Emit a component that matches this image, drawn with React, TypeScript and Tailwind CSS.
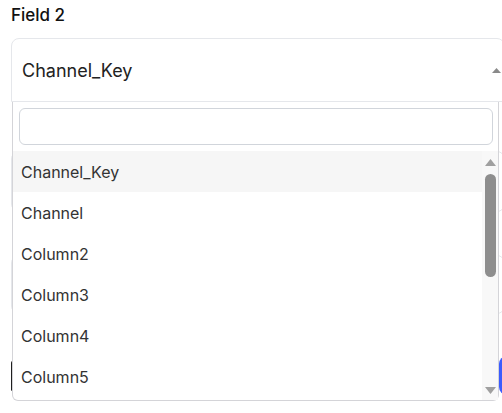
import { ChevronDown } from 'lucide-react';

const options = ['Channel_Key', 'Channel', 'Column2', 'Column3', 'Column4', 'Column5'];

function Triangle({ up, className }: { up?: boolean; className?: string }) {
    return (
        <svg width="11" height="7" viewBox="0 0 11 7" className={className}>
            {up ? <polygon points="5.5,0 11,7 0,7" fill="currentColor" /> : <polygon points="0,0 11,0 5.5,7" fill="currentColor" />}
        </svg>
    );
}

export default function App() {
    return (
        <div className="h-[413px] w-[502px] overflow-hidden bg-white pl-[11px] pt-[3px] font-['Inter','Noto_Sans',sans-serif]">
            <label className="block text-[17px] font-medium leading-6 text-[#111]">Field 2</label>

            {/* Select with open menu */}
            <div className="relative z-10 mt-[11px] w-[494px]">
                <div className="flex h-[64px] items-center justify-between rounded-t-lg border border-[#e5e7eb] pl-[10px] pr-[3px]">
                    <span className="text-[18px] text-[#222]">Channel_Key</span>
                    <svg width="9" height="5" viewBox="0 0 9 5" className="text-[#8a8a8a]">
                        <polygon points="4.5,0 9,5 0,5" fill="currentColor" />
                    </svg>
                </div>

                {/* Dropdown */}
                <div className="absolute left-px top-full w-[487px] rounded-b-md border-x border-b border-[#d4d4d8] bg-white">
                    <div className="p-[6px] pr-[5px]">
                        <input className="block h-[37px] w-full rounded-md border border-[#d1d5db] bg-white px-2 text-[16px] outline-none" />
                    </div>
                    <div className="flex h-[249px] overflow-hidden">
                        <ul className="flex-1">
                            {options.map((o, i) => (
                                <li
                                    key={o}
                                    className={`flex h-[41px] items-center px-2 text-[16px] text-[#333] ${i === 0 ? 'bg-[#f6f6f6]' : ''}`}
                                >
                                    {o}
                                </li>
                            ))}
                        </ul>
                        {/* Scrollbar */}
                        <div className="flex w-[16px] flex-col items-center bg-[#f8f8f8] pt-[8px] text-[#a0a0a0]">
                            <Triangle up />
                            <div className="mt-[8px] h-[103px] w-[11px] rounded-full bg-[#8e8e8e]" />
                            <Triangle className="mt-auto mb-[6px]" />
                        </div>
                    </div>
                </div>
            </div>

            {/* Page content beneath the menu */}
            <div className="mt-[49px] flex h-[61px] w-[494px] items-center justify-end rounded-lg border border-[#e5e7eb] pr-[2px]">
                <ChevronDown size={16} className="text-[#444]" />
            </div>
            <div className="mt-[43px] h-[59px] w-[494px] rounded-lg border border-[#e5e7eb]" />
            <div className="mt-[42px] flex w-[580px] items-center">
                <div className="h-[30px] w-[3px] rounded-full bg-[#1f1f1f]" />
                <div className="ml-auto h-[39px] w-[92px] rounded-lg bg-[#3b5bfd]" />
            </div>
        </div>
    );
}
